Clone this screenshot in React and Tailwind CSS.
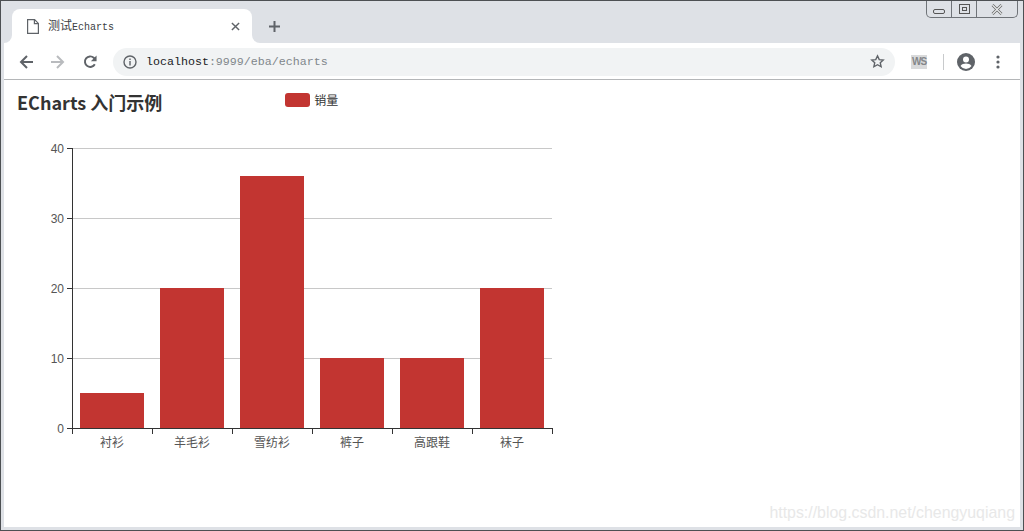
const bars = [
  { name: '衬衫', x: 80, top: 393 },
  { name: '羊毛衫', x: 160, top: 288 },
  { name: '雪纺衫', x: 240, top: 176 },
  { name: '裤子', x: 320, top: 358 },
  { name: '高跟鞋', x: 400, top: 358 },
  { name: '袜子', x: 480, top: 288 },
];
const ticks = [
  { label: '40', y: 148 },
  { label: '30', y: 218 },
  { label: '20', y: 288 },
  { label: '10', y: 358 },
  { label: '0', y: 428 },
];
const cjk = '"Noto Sans CJK SC", sans-serif';

const Chart = () => (
  // viewBox uses page coordinates, so the numbers read straight off the screenshot
  <svg width="560" height="330" viewBox="4 135 560 330" className="block" shapeRendering="crispEdges">
    {ticks.slice(0, 4).map(t => (
      <line key={t.y} x1="72" x2="552" y1={t.y + 0.5} y2={t.y + 0.5} stroke="#c8c8c8" />
    ))}
    {bars.map(b => (
      <rect key={b.name} x={b.x} y={b.top} width="64" height={428 - b.top} fill="#c23531" />
    ))}
    <line x1="72.5" x2="72.5" y1="148" y2="429" stroke="#333" />
    <line x1="67" x2="553" y1="428.5" y2="428.5" stroke="#333" />
    {ticks.map(t => (
      <g key={t.label}>
        <line x1="67" x2="72" y1={t.y + 0.5} y2={t.y + 0.5} stroke="#333" />
        <text x="64" y={t.y + 4.5} textAnchor="end" fontSize="12" fill="#555" fontFamily='"Liberation Sans", sans-serif'>{t.label}</text>
      </g>
    ))}
    {[72, 152, 232, 312, 392, 472, 552].map(x => (
      <line key={x} x1={x + 0.5} x2={x + 0.5} y1="428" y2="434" stroke="#333" />
    ))}
    {bars.map(b => (
      <text key={b.name} x={b.x + 32} y="447" textAnchor="middle" fontSize="12" fill="#555" fontFamily={cjk}>{b.name}</text>
    ))}
  </svg>
);

const WindowControls = () => (
  <div className="absolute right-[5px] top-0 flex h-[17px] w-[92px] rounded-b-[5px] border border-t-0 border-[#6f7378] bg-[#dee1e6]">
    <div className="flex w-[25px] items-end justify-center border-r border-[#6f7378] pb-[3px]">
      <div className="h-[5px] w-[12px] rounded-[2px] border border-[#555]" />
    </div>
    <div className="flex w-[25px] items-center justify-center border-r border-[#6f7378]">
      <div className="flex h-[10px] w-[11px] items-center justify-center border border-[#555]">
        <div className="h-[4px] w-[5px] border border-[#555]" />
      </div>
    </div>
    <div className="flex flex-1 items-center justify-center">
      <svg width="12" height="11" viewBox="0 0 12 11" fill="none">
        <path d="M1.500 1 10.500 10M10.500 1 1.500 10" stroke="#666" strokeWidth="2.600" />
        <path d="M1.500 1 10.500 10M10.500 1 1.500 10" stroke="#eceef0" strokeWidth="1.100" />
      </svg>
    </div>
  </div>
);

const Tab = () => (
  <div className="relative ml-[8px] flex h-[34px] w-[240px] items-center rounded-t-[8px] bg-white pl-[15px] pr-[12px]">
    <div className="absolute bottom-0 left-[-8px] h-[8px] w-[8px] bg-white">
      <div className="h-full w-full rounded-br-[8px] bg-[#dee1e6]" />
    </div>
    <div className="absolute bottom-0 right-[-8px] h-[8px] w-[8px] bg-white">
      <div className="h-full w-full rounded-bl-[8px] bg-[#dee1e6]" />
    </div>
    <svg width="12" height="15" viewBox="0 0 12 15" fill="none" stroke="#5f6368" strokeWidth="1.200"><path d="M.6.6h7l3.8 3.8v10H.6zM7.400.6v4h4" /></svg>
    <span className="ml-[9px] mb-[2px] flex-1 text-[12px] text-[#3c4043]" style={{ fontFamily: cjk }}>
      测试<span className="text-[10px]" style={{ fontFamily: '"Liberation Mono", monospace' }}>Echarts</span>
    </span>
    <svg width="9" height="9" viewBox="0 0 10 10" stroke="#5f6368" strokeWidth="1.600"><path d="M1 1l8 8M9 1l-8 8" /></svg>
  </div>
);

const Toolbar = () => (
  <div className="flex h-[37px] items-center border-b border-[#b4b6b8] bg-white pt-[1px]">
    <svg className="ml-[15px]" width="14" height="14" viewBox="0 0 14 14" fill="none" stroke="#5f6368" strokeWidth="2"><path d="M14 7H2M8 1 2 7l6 6" /></svg>
    <svg className="ml-[18px]" width="14" height="14" viewBox="0 0 14 14" fill="none" stroke="#b9bbbe" strokeWidth="2"><path d="M0 7h12M6 1l6 6-6 6" /></svg>
    <svg className="ml-[18px]" width="14" height="14" viewBox="0 0 16 16" fill="none" stroke="#5f6368" strokeWidth="2.200"><path d="M13.500 10.500A6 6 0 1 1 12.300 3.200L14 5" /><path d="M15.500 .5v6.500H9z" fill="#5f6368" stroke="none" /></svg>
    <div className="ml-[16px] flex h-[28px] w-[782px] items-center rounded-full bg-[#f1f3f4] pl-[10px] pr-[10px]">
      <svg width="14" height="14" viewBox="0 0 14 14" fill="none" stroke="#5f6368" strokeWidth="1.400"><circle cx="7" cy="7" r="6" /><path d="M7 6v4.400M7 3.400v1.500" /></svg>
      <span className="ml-[9px] flex-1 text-[11.650px] text-[#80868b]" style={{ fontFamily: '"Liberation Mono", monospace' }}>
        <span className="text-[#202124]">localhost</span>:9999/eba/echarts
      </span>
      <svg width="15" height="15" viewBox="0 0 24 24" fill="none" stroke="#5f6368" strokeWidth="2.200"><path d="M12 3l2.800 6 6.400.7-4.800 4.300 1.400 6.400L12 17.100 6.200 20.400l1.400-6.400L2.800 9.700 9.200 9z" /></svg>
    </div>
    <div className="ml-[16px] flex h-[14px] w-[16px] items-center justify-center bg-[#d9dadb] text-[10px] font-bold tracking-[-1px] text-[#85878a]" style={{ fontFamily: '"Liberation Sans", sans-serif' }}>WS</div>
    <div className="ml-[16px] h-[16px] w-px bg-[#c8cacc]" />
    <svg className="ml-[13px]" width="18" height="18" viewBox="0 0 18 18"><circle cx="9" cy="9" r="9" fill="#5f6368" /><circle cx="9" cy="6.500" r="3" fill="#fff" /><path d="M3.500 13c1.200-2 3.300-2.600 5.500-2.600s4.300.6 5.500 2.600A7 7 0 0 1 9 16a7 7 0 0 1-5.500-3z" fill="#fff" /></svg>
    <svg className="ml-[21px]" width="4" height="14" viewBox="0 0 4 14" fill="#5f6368"><circle cx="2" cy="2" r="1.600" /><circle cx="2" cy="7" r="1.600" /><circle cx="2" cy="12" r="1.600" /></svg>
  </div>
);

const App = () => (
  <div className="relative h-[531px] w-[1024px] overflow-hidden border border-[#4d5053] bg-[#dee1e6]">
    <div className="h-full border-x-[3px] border-b-[3px] border-[#dee1e6] bg-white">
      <div className="flex h-[42px] items-end bg-[#dee1e6]">
        <Tab />
        <svg className="mb-[11px] ml-[17px]" width="11" height="11" viewBox="0 0 11 11" stroke="#5f6368" strokeWidth="2"><path d="M5.500 0v11M0 5.500h11" /></svg>
      </div>
      <Toolbar />
      <div className="flex h-[55px]">
        <h1 className="ml-[13px] mt-[9px] text-[18px] font-bold leading-[26px] text-[#333]" style={{ fontFamily: cjk }}>ECharts 入门示例</h1>
        <div className="ml-[123px] mt-[13px] flex h-[14px] items-center">
          <div className="h-[14px] w-[25px] rounded-[3px] bg-[#c23531]" />
          <span className="ml-[4px] text-[12px] text-[#333]" style={{ fontFamily: cjk }}>销量</span>
        </div>
      </div>
      <Chart />
    </div>
    <WindowControls />
    <span className="absolute bottom-[5px] right-[8px] text-[15.900px] text-[#e8e8e8]" style={{ fontFamily: '"Liberation Sans", sans-serif' }}>https://blog.csdn.net/chengyuqiang</span>
  </div>
);

export default App;
